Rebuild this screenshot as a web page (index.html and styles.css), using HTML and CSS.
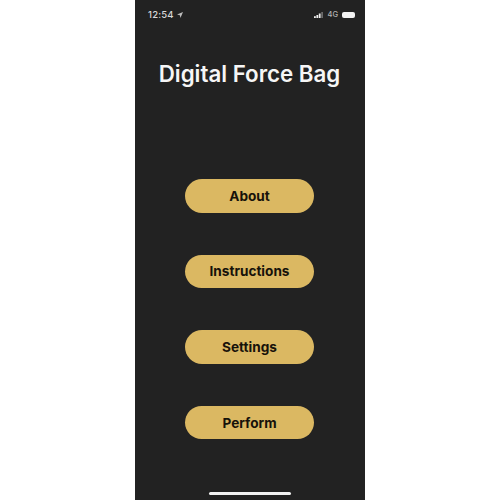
FILE: index.html
```html
<!DOCTYPE html>
<html lang="en">
<head>
<meta charset="utf-8">
<title>Digital Force Bag</title>
<link rel="stylesheet" href="styles.css">
</head>
<body>
<main class="phone">
  <div class="status">
    <div class="status-left">
      <span class="time">12:54</span>
      <svg class="loc" viewBox="0 0 8 8" width="6" height="6"><path d="M8 0 0 3.4 3.8 4.2 4.6 8Z" fill="#bdbdbd"/></svg>
    </div>
    <div class="status-right">
      <svg class="bars" viewBox="0 0 9 6" width="9" height="6">
        <rect x="0" y="4.2" width="1.8" height="1.8" fill="#f0f0f0"/>
        <rect x="2.4" y="3" width="1.8" height="3" fill="#f0f0f0"/>
        <rect x="4.8" y="1.5" width="1.8" height="4.5" fill="#f0f0f0"/>
        <rect x="7.2" y="0" width="1.8" height="6" fill="#6a6a6a"/>
      </svg>
      <span class="net">4G</span>
      <span class="battery"></span>
    </div>
  </div>
  <h1 class="title">Digital Force Bag</h1>
  <nav class="menu">
    <a class="btn">About</a>
    <a class="btn">Instructions</a>
    <a class="btn">Settings</a>
    <a class="btn">Perform</a>
  </nav>
  <div class="home"></div>
</main>
</body>
</html>
```
FILE: styles.css
```css
* { box-sizing: border-box; }
html, body { margin: 0; height: 100%; background: #fff; }
body { display: flex; justify-content: center; font-family: Inter, "Liberation Sans", sans-serif; }
.phone {
  width: 230px;
  height: 500px;
  background: #222222;
  display: flex;
  flex-direction: column;
  align-items: center;
  overflow: hidden;
}
.status {
  width: 100%;
  height: 28px;
  padding: 8px 10px 0 13px;
  display: flex;
  justify-content: space-between;
  align-items: flex-start;
  color: #d8d8d8;
}
.status-left, .status-right { display: flex; align-items: center; height: 13px; }
.status-left { gap: 3px; }
.status-right { gap: 4px; }
.time { font-size: 9.5px; font-weight: 500; letter-spacing: 0.2px; }
.net { font-size: 7.5px; font-weight: 500; color: #b4b4b4; }
.battery { width: 13px; height: 6px; background: #f2f2f2; border-radius: 2px; }
.title {
  margin: 31px 1px 0 0;
  font-size: 22.3px;
  line-height: 30px;
  font-weight: 600;
  color: #f6f6f6;
  white-space: nowrap;
}
.menu {
  margin-top: 90px;
  padding-right: 1px;
  display: flex;
  flex-direction: column;
  gap: 42px;
}
.btn {
  width: 129px;
  height: 33.6px;
  border-radius: 17px;
  background: #dbb862;
  color: #17120a;
  display: flex;
  align-items: center;
  justify-content: center;
  font-size: 13.6px;
  font-weight: 700;
}
.home {
  margin-top: auto;
  margin-bottom: 5px;
  width: 82px;
  height: 3px;
  border-radius: 2px;
  background: #f2f2f2;
}
```
